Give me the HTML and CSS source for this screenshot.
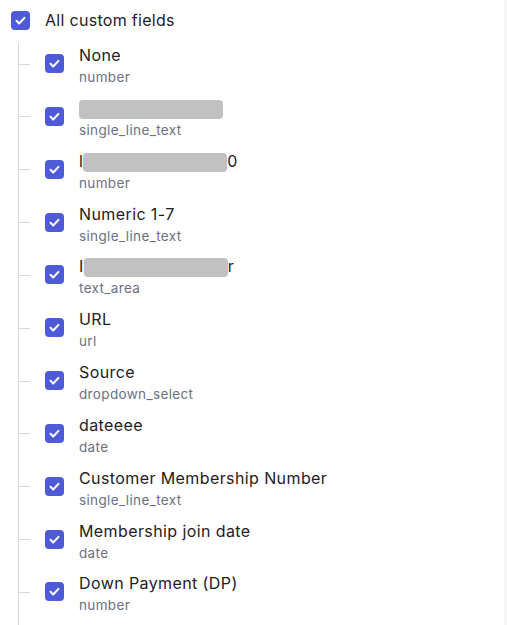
FILE: index.html
```html
<!DOCTYPE html>
<html lang="en">

<head>
    <meta charset="UTF-8">
    <meta name="viewport" content="width=device-width, initial-scale=1.0">
    <title>Custom fields</title>
    <link rel="stylesheet" href="styles.css">
</head>

<body>
    <div class="page">
        <div class="fields">
            <div class="parent">
                <span class="check"><svg viewBox="0 0 19 19"><path d="M5.5 9.8l2.7 2.7 5.3-5.6" /></svg></span>
                <span class="parent-label">All custom fields</span>
            </div>

            <ul class="tree">
                <li class="item">
                    <span class="branch"></span>
                    <span class="check"><svg viewBox="0 0 19 19"><path d="M5.5 9.8l2.7 2.7 5.3-5.6" /></svg></span>
                    <div class="info">
                        <div class="name">None</div>
                        <div class="type">number</div>
                    </div>
                </li>
                <li class="item">
                    <span class="branch"></span>
                    <span class="check"><svg viewBox="0 0 19 19"><path d="M5.5 9.8l2.7 2.7 5.3-5.6" /></svg></span>
                    <div class="info">
                        <div class="name"><span class="hidden-text"></span></div>
                        <div class="type">single_line_text</div>
                    </div>
                </li>
                <li class="item">
                    <span class="branch"></span>
                    <span class="check"><svg viewBox="0 0 19 19"><path d="M5.5 9.8l2.7 2.7 5.3-5.6" /></svg></span>
                    <div class="info">
                        <div class="name">l<span class="hidden-text"></span>0</div>
                        <div class="type">number</div>
                    </div>
                </li>
                <li class="item">
                    <span class="branch"></span>
                    <span class="check"><svg viewBox="0 0 19 19"><path d="M5.5 9.8l2.7 2.7 5.3-5.6" /></svg></span>
                    <div class="info">
                        <div class="name">Numeric 1-7</div>
                        <div class="type">single_line_text</div>
                    </div>
                </li>
                <li class="item">
                    <span class="branch"></span>
                    <span class="check"><svg viewBox="0 0 19 19"><path d="M5.5 9.8l2.7 2.7 5.3-5.6" /></svg></span>
                    <div class="info">
                        <div class="name">I<span class="hidden-text"></span>r</div>
                        <div class="type">text_area</div>
                    </div>
                </li>
                <li class="item">
                    <span class="branch"></span>
                    <span class="check"><svg viewBox="0 0 19 19"><path d="M5.5 9.8l2.7 2.7 5.3-5.6" /></svg></span>
                    <div class="info">
                        <div class="name">URL</div>
                        <div class="type">url</div>
                    </div>
                </li>
                <li class="item">
                    <span class="branch"></span>
                    <span class="check"><svg viewBox="0 0 19 19"><path d="M5.5 9.8l2.7 2.7 5.3-5.6" /></svg></span>
                    <div class="info">
                        <div class="name">Source</div>
                        <div class="type">dropdown_select</div>
                    </div>
                </li>
                <li class="item">
                    <span class="branch"></span>
                    <span class="check"><svg viewBox="0 0 19 19"><path d="M5.5 9.8l2.7 2.7 5.3-5.6" /></svg></span>
                    <div class="info">
                        <div class="name">dateeee</div>
                        <div class="type">date</div>
                    </div>
                </li>
                <li class="item">
                    <span class="branch"></span>
                    <span class="check"><svg viewBox="0 0 19 19"><path d="M5.5 9.8l2.7 2.7 5.3-5.6" /></svg></span>
                    <div class="info">
                        <div class="name">Customer Membership Number</div>
                        <div class="type">single_line_text</div>
                    </div>
                </li>
                <li class="item">
                    <span class="branch"></span>
                    <span class="check"><svg viewBox="0 0 19 19"><path d="M5.5 9.8l2.7 2.7 5.3-5.6" /></svg></span>
                    <div class="info">
                        <div class="name">Membership join date</div>
                        <div class="type">date</div>
                    </div>
                </li>
                <li class="item">
                    <span class="branch"></span>
                    <span class="check"><svg viewBox="0 0 19 19"><path d="M5.5 9.8l2.7 2.7 5.3-5.6" /></svg></span>
                    <div class="info">
                        <div class="name">Down Payment (DP)</div>
                        <div class="type">number</div>
                    </div>
                </li>
            </ul>
        </div>
        <div class="edge"></div>
    </div>
</body>

</html>
```

FILE: styles.css
```css
* {
    box-sizing: border-box;
    margin: 0;
    padding: 0;
    font-family: Inter, "Noto Sans", sans-serif;
}

body {
    background: #ffffff;
}

.page {
    display: flex;
    width: 100%;
    height: 625px;
    overflow: hidden;
}

.fields {
    flex: 1;
    padding: 10px 0 0 11px;
}

.edge {
    width: 3px;
    background: #f7f7f7;
}

.parent {
    display: flex;
    align-items: center;
    gap: 15px;
    height: 21px;
}

.parent-label {
    font-size: 16px;
    line-height: 21px;
    letter-spacing: 0.3px;
    color: #1f2024;
}

.check {
    flex: none;
    width: 19px;
    height: 19px;
    border-radius: 4px;
    background: #4d5bd6;
    display: flex;
}

.check svg {
    width: 19px;
    height: 19px;
    fill: none;
    stroke: #ffffff;
    stroke-width: 2;
    stroke-linecap: round;
    stroke-linejoin: round;
}

.tree {
    list-style: none;
    margin: 12px 0 0 7px;
    border-left: 1px solid #d6d8de;
    min-height: 600px;
}

.item {
    display: flex;
    align-items: center;
    margin-bottom: 8.85px;
}

.branch {
    flex: none;
    width: 11px;
    height: 1px;
    background: #d6d8de;
    margin-right: 15px;
    margin-top: -2px;
}

.item .check {
    margin-top: -3px;
}

.info {
    margin-left: 15px;
}

.name {
    font-size: 16px;
    line-height: 24px;
    letter-spacing: 0.4px;
    color: #1f2024;
    white-space: nowrap;
}

.type {
    font-size: 13.5px;
    line-height: 20px;
    letter-spacing: 0.35px;
    color: #6b7180;
}

.hidden-text {
    display: inline-block;
    width: 144px;
    height: 19px;
    background: #c1c1c1;
    border-radius: 4px;
    vertical-align: -5px;
}
```
